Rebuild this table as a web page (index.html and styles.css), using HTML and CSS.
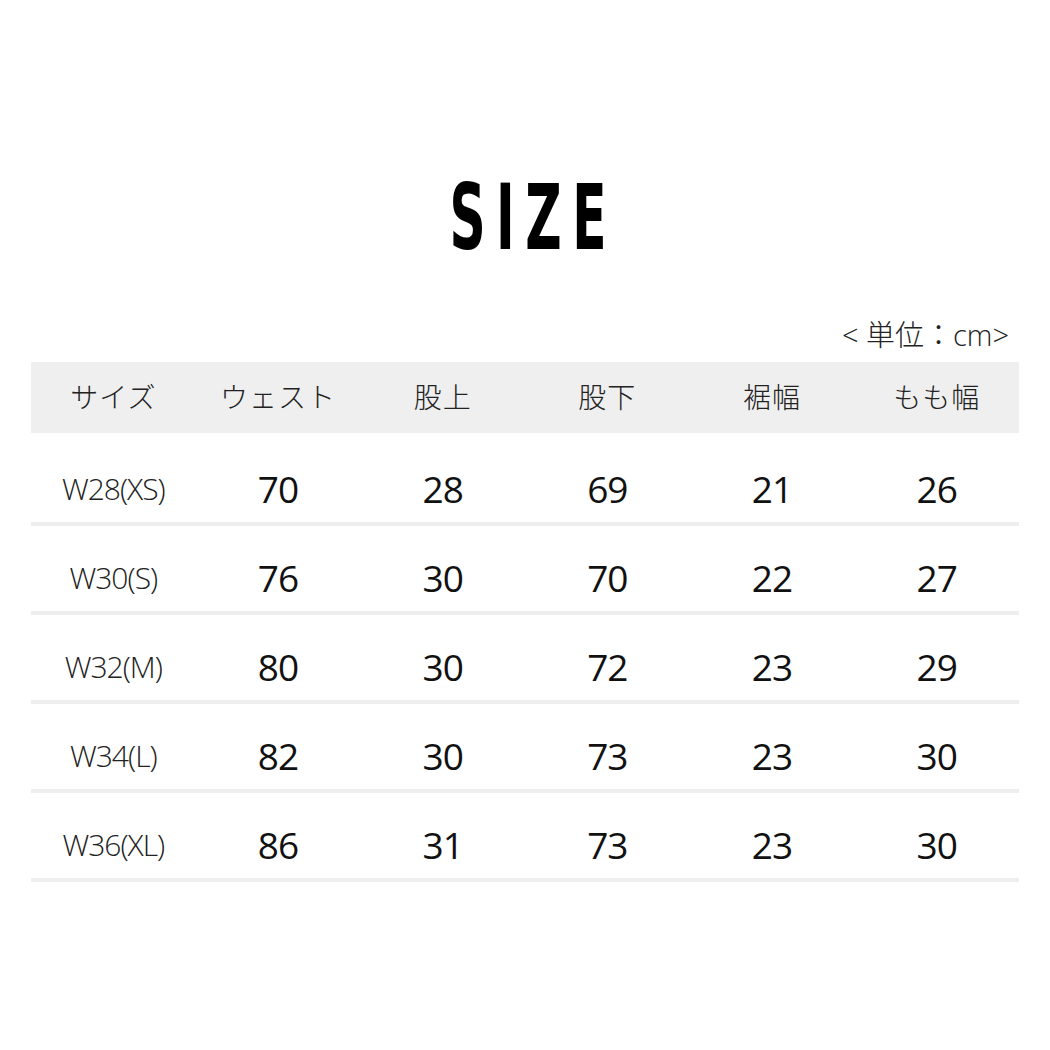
FILE: index.html
```html
<!DOCTYPE html>
<html lang="ja">
<head>
<meta charset="utf-8">
<link rel="stylesheet" href="styles.css">
</head>
<body>
<main class="page">
  <h1 class="title"><span class="title-inner">SIZE</span></h1>
  <div class="unit">&lt; 単位：cm&gt;</div>
  <div class="table">
    <div class="row head">
      <div class="cell">サイズ</div>
      <div class="cell">ウェスト</div>
      <div class="cell">股上</div>
      <div class="cell">股下</div>
      <div class="cell">裾幅</div>
      <div class="cell">もも幅</div>
    </div>
    <div class="row">
      <div class="cell size">W28(XS)</div>
      <div class="cell num">70</div><div class="cell num">28</div><div class="cell num">69</div><div class="cell num">21</div><div class="cell num">26</div>
    </div>
    <div class="row">
      <div class="cell size">W30(S)</div>
      <div class="cell num">76</div><div class="cell num">30</div><div class="cell num">70</div><div class="cell num">22</div><div class="cell num">27</div>
    </div>
    <div class="row">
      <div class="cell size">W32(M)</div>
      <div class="cell num">80</div><div class="cell num">30</div><div class="cell num">72</div><div class="cell num">23</div><div class="cell num">29</div>
    </div>
    <div class="row">
      <div class="cell size">W34(L)</div>
      <div class="cell num">82</div><div class="cell num">30</div><div class="cell num">73</div><div class="cell num">23</div><div class="cell num">30</div>
    </div>
    <div class="row">
      <div class="cell size">W36(XL)</div>
      <div class="cell num">86</div><div class="cell num">31</div><div class="cell num">73</div><div class="cell num">23</div><div class="cell num">30</div>
    </div>
  </div>
</main>
</body>
</html>
```
FILE: styles.css
```css
html, body {
  margin: 0;
  padding: 0;
  background: #ffffff;
}
body {
  width: 1050px;
  height: 1050px;
  font-family: "Open Sans", "Noto Sans CJK JP", sans-serif;
  color: #111;
}
.page {
  padding: 172px 31px 0 31px;
  display: flex;
  flex-direction: column;
}
.title {
  margin: 0;
  height: 92px;
  display: flex;
  justify-content: center;
  align-items: center;
  font-family: "Liberation Sans Narrow", "DejaVu Sans Condensed", "Liberation Sans", sans-serif;
  font-weight: 700;
  font-size: 90px;
  line-height: 1;
  color: #000;
}
.title-inner {
  display: inline-block;
  letter-spacing: 17px;
  margin-right: -17px;
  transform: scaleX(0.62);
}
.unit {
  margin-top: 54px;
  align-self: flex-end;
  margin-right: 10px;
  font-family: "Open Sans", "Noto Sans CJK JP", sans-serif;
  font-weight: 300;
  font-size: 29px;
  line-height: 34px;
  color: #222;
}
.table {
  margin-top: 10px;
  display: flex;
  flex-direction: column;
}
.row {
  display: grid;
  grid-template-columns: repeat(6, 1fr);
  padding-top: 18px;
  box-sizing: border-box;
  height: 89px;
  border-bottom: 4px solid #eeeeee;
  align-items: center;
}
.row.head {
  height: 71px;
  padding-top: 0;
  padding-bottom: 4px;
  background: #efefef;
  border-bottom: 0;
  margin-bottom: 4px;
}
.cell {
  text-align: center;
}
.head .cell {
  font-family: "Noto Sans CJK JP", sans-serif;
  font-weight: 300;
  font-size: 28px;
  color: #222;
  letter-spacing: 1px;
}
.size {
  font-family: "Open Sans", sans-serif;
  font-weight: 300;
  font-size: 30px;
  color: #222;
  letter-spacing: -1px;
}
.num {
  font-family: "Open Sans", sans-serif;
  font-weight: 400;
  font-size: 37px;
  letter-spacing: -1px;
  color: #111;
}
```
